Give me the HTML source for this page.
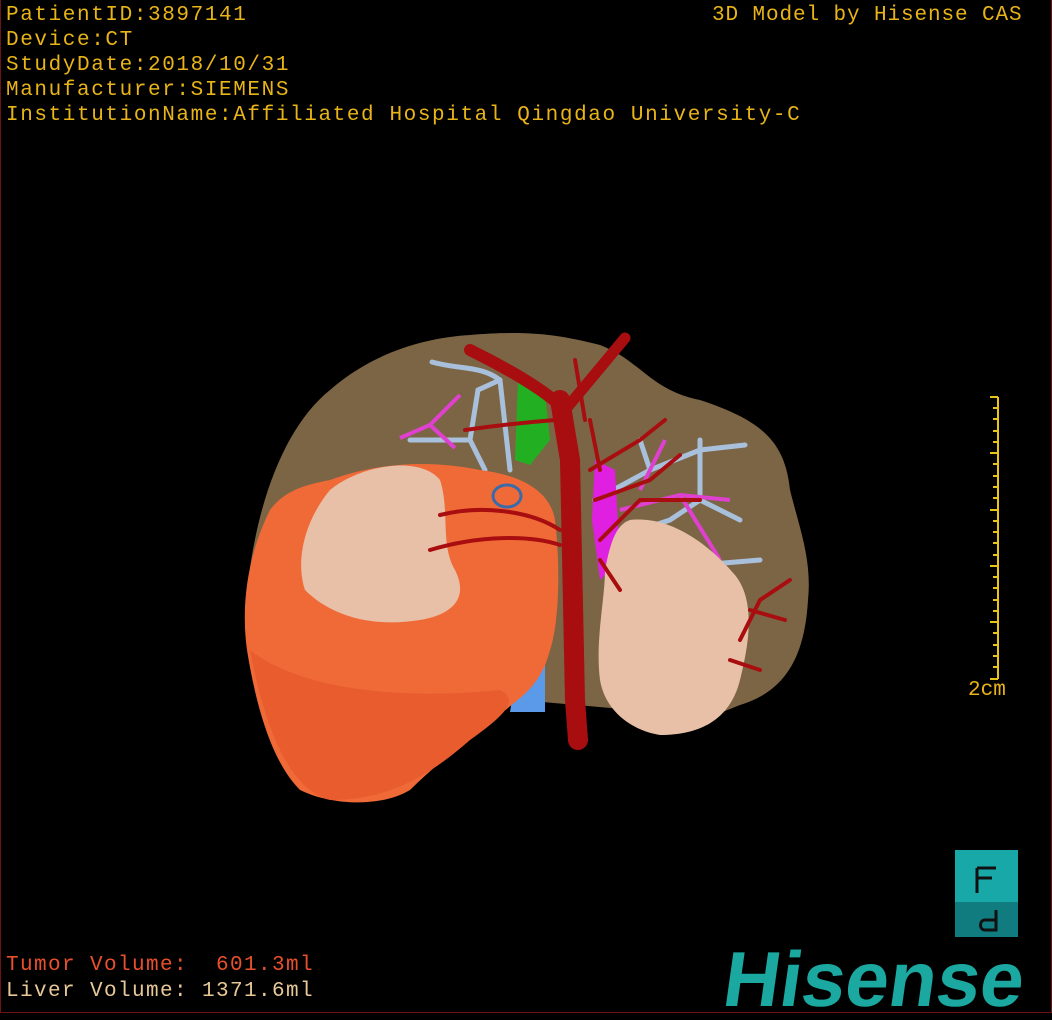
<!DOCTYPE html>
<html><head><meta charset="utf-8"><style>
html,body{margin:0;padding:0;background:#000;}
body{width:1052px;height:1020px;position:relative;overflow:hidden;}
.frame{position:absolute;left:0;top:0;width:1050px;height:1012px;border:1px solid #6e1414;border-top:none;}
.t{position:absolute;color:#e8b418;font-size:21px;line-height:25px;white-space:pre;letter-spacing:1.6px;font-family:"Liberation Mono","DejaVu Sans Mono",monospace;}
</style></head><body>
<div class="frame"></div>
<div class="t" style="left:6px;top:3px;">PatientID:3897141<br>Device:CT<br>StudyDate:2018/10/31<br>Manufacturer:SIEMENS<br>InstitutionName:Affiliated Hospital Qingdao University-C</div>
<div class="t" style="left:712px;top:3px;letter-spacing:0.9px;">3D Model by Hisense CAS</div>
<div class="t" style="left:6px;top:953px;color:#e8502c;letter-spacing:1.4px;">Tumor Volume:  601.3ml</div>
<div class="t" style="left:6px;top:979px;color:#e8c898;letter-spacing:1.4px;">Liver Volume: 1371.6ml</div>
<div class="t" style="left:968px;top:678px;letter-spacing:0;">2cm</div>
<svg width="1052" height="1020" style="position:absolute;left:0;top:0">
<g stroke="#e8c418" stroke-width="2">
<line x1="998" y1="397" x2="998" y2="679"/>
<line x1="990" y1="397" x2="998" y2="397"/><line x1="990" y1="453" x2="998" y2="453"/><line x1="990" y1="510" x2="998" y2="510"/><line x1="990" y1="566" x2="998" y2="566"/><line x1="990" y1="622" x2="998" y2="622"/><line x1="990" y1="679" x2="998" y2="679"/>
<line x1="993" y1="408" x2="998" y2="408"/><line x1="993" y1="419" x2="998" y2="419"/><line x1="993" y1="431" x2="998" y2="431"/><line x1="993" y1="442" x2="998" y2="442"/>
<line x1="993" y1="464" x2="998" y2="464"/><line x1="993" y1="476" x2="998" y2="476"/><line x1="993" y1="487" x2="998" y2="487"/><line x1="993" y1="498" x2="998" y2="498"/>
<line x1="993" y1="521" x2="998" y2="521"/><line x1="993" y1="532" x2="998" y2="532"/><line x1="993" y1="543" x2="998" y2="543"/><line x1="993" y1="555" x2="998" y2="555"/>
<line x1="993" y1="577" x2="998" y2="577"/><line x1="993" y1="588" x2="998" y2="588"/><line x1="993" y1="600" x2="998" y2="600"/><line x1="993" y1="611" x2="998" y2="611"/>
<line x1="993" y1="633" x2="998" y2="633"/><line x1="993" y1="645" x2="998" y2="645"/><line x1="993" y1="656" x2="998" y2="656"/><line x1="993" y1="667" x2="998" y2="667"/>
</g>
<path d="M470 335 C530 330 560 335 600 345 C640 360 650 390 700 400 C760 420 785 440 790 490 C800 530 812 560 808 600 C805 650 790 690 740 705 C715 715 705 720 700 716 L520 700 L300 720 L245 620 C250 520 280 430 330 390 C370 355 420 338 470 335 Z" fill="#7c6545"/>
<path d="M518 380 L545 395 L550 440 L530 465 L515 460 Z" fill="#22b022"/>
<g stroke="#a8c0dc" stroke-width="5" fill="none" stroke-linecap="round">
<path d="M432 362 C460 370 480 365 500 380 L510 470"/>
<path d="M500 380 L478 390 L470 440 L485 470"/>
<path d="M595 500 L650 470 L700 450 L745 445"/>
<path d="M610 540 L670 520 L700 500 L740 520"/>
<path d="M700 500 L700 440"/><path d="M650 470 L640 440"/>
<path d="M700 565 L760 560"/><path d="M470 440 L410 440"/>
</g>
<path d="M520 650 L545 660 L545 712 L510 712 Z" fill="#5a9ae8"/>
<g stroke="#e040d0" stroke-width="4" fill="none">
<path d="M400 438 L430 425 L460 395"/><path d="M430 425 L455 448"/>
<path d="M620 510 L680 495 L730 500"/><path d="M640 490 L665 440"/>
<path d="M680 495 L720 560"/>
</g>
<path d="M595 460 L615 470 L620 560 L600 580 L592 520 Z" fill="#e020e0"/>
<path d="M330 480 C380 462 430 460 480 470 C520 475 550 490 555 520 C560 560 560 620 550 650 C540 690 515 700 500 715 C470 740 440 760 410 790 C380 808 330 805 300 790 C270 760 255 700 247 650 C240 600 250 550 270 510 C285 490 305 485 330 480 Z" fill="#f06a38"/>
<path d="M250 650 C300 690 400 700 500 690 C520 700 505 715 470 740 C430 775 390 800 330 800 C290 790 265 730 250 650 Z" fill="#e85c2e"/>
<path d="M330 490 C360 465 420 455 440 480 C450 510 440 545 455 570 C470 600 450 615 420 620 C370 628 330 615 305 590 C295 560 305 520 330 490 Z" fill="#e8c0a8"/>
<path d="M630 520 C670 515 710 545 735 575 C755 600 750 640 740 680 C730 720 700 735 660 735 C630 730 605 710 600 680 C595 640 605 600 605 570 C610 545 615 525 630 520 Z" fill="#e8c0a8"/>
<ellipse cx="507" cy="496" rx="14" ry="11" fill="none" stroke="#3a6aa8" stroke-width="3"/>
<g stroke="#a80e10" fill="none" stroke-linecap="round">
<path d="M560 400 L570 460 L575 700 L578 740" stroke-width="20"/>
<path d="M470 350 C510 370 545 390 565 410" stroke-width="12"/>
<path d="M565 410 L590 380 L625 338" stroke-width="11"/>
<g stroke-width="4">
<path d="M440 515 C480 505 530 510 560 530"/>
<path d="M430 550 C480 535 530 535 560 545"/>
<path d="M465 430 C500 425 530 422 555 420"/>
<path d="M590 470 L640 440 L665 420"/><path d="M595 500 L650 480 L680 455"/>
<path d="M600 540 L640 500 L700 500"/><path d="M600 560 L620 590"/>
<path d="M740 640 L760 600 L790 580"/><path d="M750 610 L785 620"/><path d="M730 660 L760 670"/>
<path d="M575 360 L585 420"/><path d="M590 420 L600 470"/>
</g></g>
<rect x="955" y="850" width="63" height="52" fill="#19a8a8"/>
<rect x="955" y="902" width="63" height="35" fill="#107c80"/>
<path d="M977 868 L977 893 M977 868 L996 868 M977 878 L992 878" stroke="#111" stroke-width="3" fill="none"/>
<path d="M996 910 L996 930 L985 930 C979 930 979 920 985 920 L996 920" stroke="#111" stroke-width="3" fill="none"/>
<text x="722" y="1006" font-family="Liberation Sans,sans-serif" font-weight="bold" font-size="78" fill="#1aa8a0" textLength="300" lengthAdjust="spacingAndGlyphs" transform="skewX(-8) translate(140 0)">Hisense</text>
</svg>
</body></html>
